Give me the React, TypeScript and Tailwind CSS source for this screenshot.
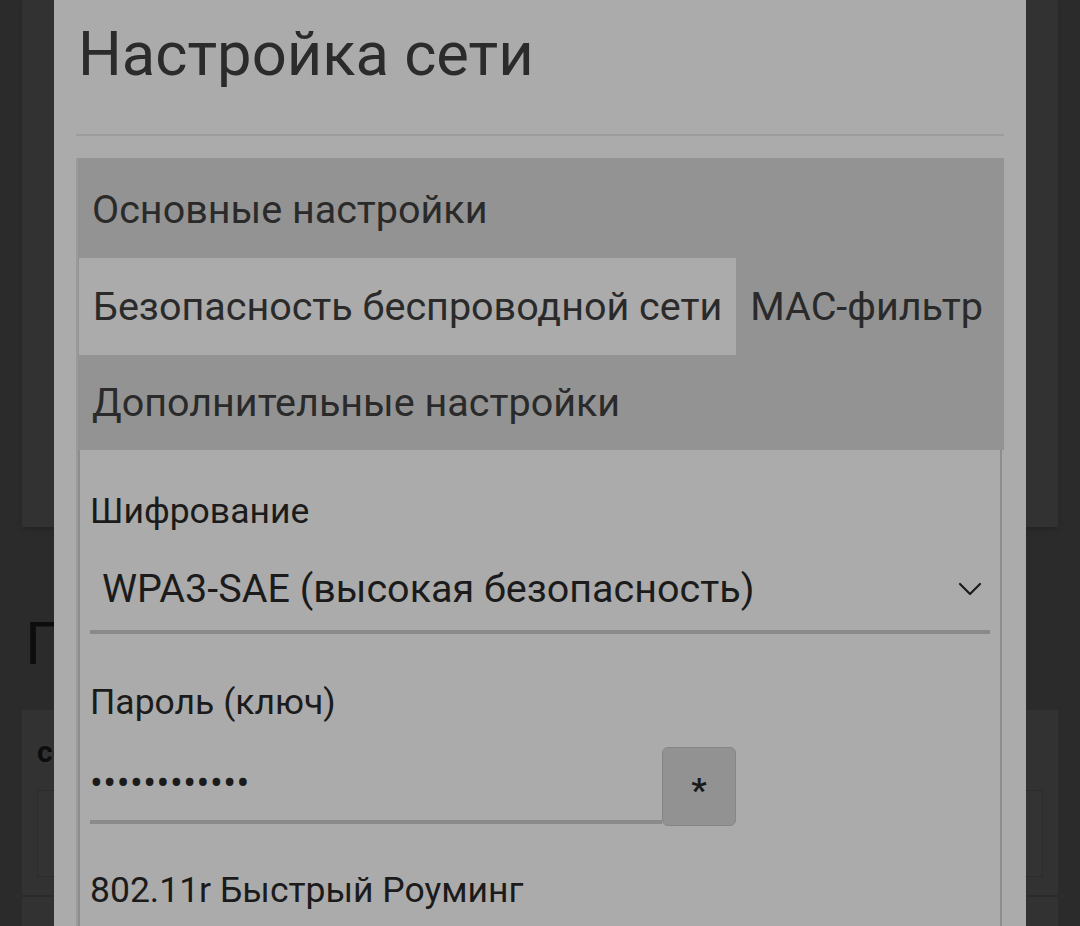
import { ChevronDown } from 'lucide-react'

function Tab({ label, active }: { label: string; active?: boolean }) {
  return (
    <div className={`flex items-center h-full px-[14px] whitespace-nowrap ${active ? 'bg-[#ababab]' : ''}`}>
      {label}
    </div>
  )
}

export default function App() {
  return (
    <div
      className="relative h-[926px] w-[1080px] overflow-hidden bg-[#2b2b2b]"
      style={{ fontFamily: 'Roboto, "Noto Sans", sans-serif' }}
    >
      {/* page behind the dialog */}
      <div className="px-[22px]">
        <div className="h-[527px] bg-[#323232] shadow-md"></div>
        <h2 className="mt-[82px] pl-[3px] text-[60px] leading-[70px] text-[#0d0d0d]">Подключения</h2>
        <div className="mt-[31px] h-[185px] bg-[#323232] px-[15px] pt-[22px]">
          <div className="text-[30px] font-bold leading-[40px] text-[#0d0d0d]">сеть</div>
          <div className="mt-[18px] h-[87px] border border-[#2c2c2c] bg-[#333333]"></div>
        </div>
        <div className="mt-[2px] h-[40px] bg-[#323232]"></div>
      </div>

      {/* dialog */}
      <div className="absolute left-[54px] top-0 h-full w-[972px] bg-[#ababab] px-[22px]">
        <h1 className="pl-[2px] pt-[17px] text-[61.5px] leading-[74px] text-[#2b2b2b]">Настройка сети</h1>
        <div className="mt-[43px] h-[2px] bg-[#9c9c9c]"></div>

        <div className="mt-[22px] border-l-2 border-[#9a9a9a]">
          <div className="bg-[#939393] text-[39.5px] text-[#2a2a2a]">
            <div className="h-[100px] pt-[4px]">
              <Tab label="Основные настройки" />
            </div>
            <div className="flex h-[97px] pl-px">
              <Tab label="Безопасность беспроводной сети" active />
              <Tab label="MAC-фильтр" />
            </div>
            <div className="h-[95px]">
              <Tab label="Дополнительные настройки" />
            </div>
          </div>

          <div className="h-[600px] border-x-2 border-[#8d8d8d] bg-[#ababab] mr-[2px] px-[10px] pt-[37px] text-[#1b1b1b]">
            <div className="text-[35.5px] leading-[48px]">Шифрование</div>
            <div className="mt-[12px] flex h-[87px] items-center justify-between border-b-4 border-[#8a8a8a] pl-[12px]">
              <span className="text-[39.5px]">WPA3-SAE (высокая безопасность)</span>
              <ChevronDown size={40} strokeWidth={1.3} className="text-[#1b1b1b]" />
            </div>

            <div className="mt-[44px] text-[35.5px] leading-[48px]">Пароль (ключ)</div>
            <div className="mt-[21px] flex items-stretch">
              <div className="flex h-[77px] w-[572px] items-center border-b-4 border-[#8a8a8a] text-[38px] tracking-[0.5px]">
                ••••••••••••
              </div>
              <button className="h-[79px] w-[74px] rounded-[6px] border border-[#868686] bg-[#929292] pt-[8px] text-[34px] font-bold text-[#1b1b1b]">
                *
              </button>
            </div>

            <div className="mt-[40px] text-[35.5px] leading-[48px]">802.11r Быстрый Роуминг</div>
          </div>
        </div>
      </div>
    </div>
  )
}
